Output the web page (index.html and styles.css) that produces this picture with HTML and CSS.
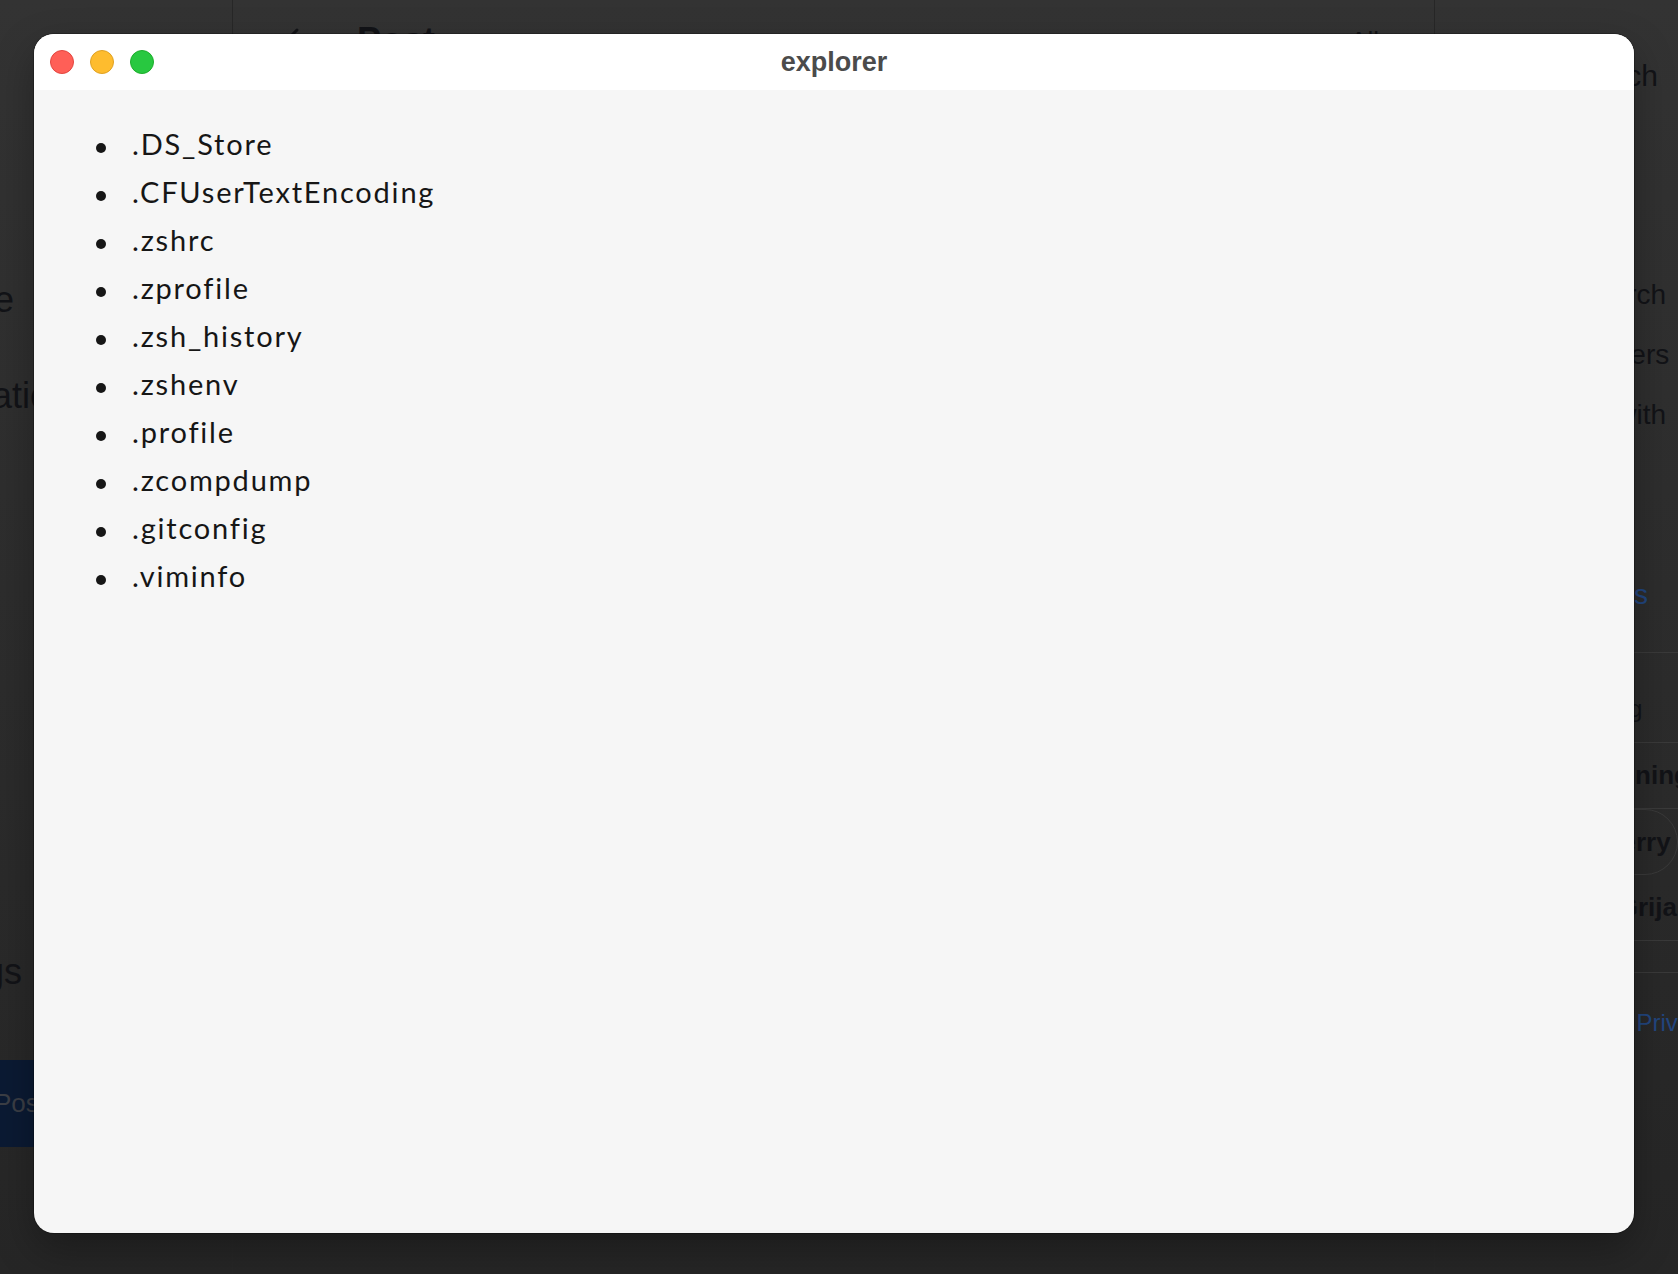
FILE: index.html
```html
<!DOCTYPE html>
<html lang="en">
<head>
    <meta charset="UTF-8">
    <meta name="viewport" content="width=device-width, initial-scale=1.0">
    <title>explorer</title>
    <link rel="stylesheet" href="styles.css">
</head>
<body>

<!-- app sitting behind the explorer window -->
<div class="backdrop">
    <aside class="nav">
        <div class="nav-list">
            <div class="nav-item">Explore</div>
            <div class="nav-item">Notifications</div>
            <div class="nav-item nav-last">Settings</div>
            <div class="nav-post">Post</div>
        </div>
    </aside>

    <main class="feed">
        <div class="feed-head">
            <svg class="back" width="30" height="30" viewBox="0 0 30 30">
                <path d="M27 15H3M14 4L3 15l11 11" fill="none" stroke="#121317" stroke-width="3" stroke-linecap="round" stroke-linejoin="round"/>
            </svg>
            <span class="feed-title">Post</span>
            <span class="feed-new">All</span>
        </div>
    </main>

    <aside class="side">
        <div class="search">Search</div>
        <div class="side-text">
            <div>Do a new search</div>
            <div>or find new users</div>
            <div>and connect with</div>
        </div>
        <div class="side-link">Search settings</div>
        <div class="trend-head">What's happening</div>
        <div class="trend-row"><span class="avatar"></span>Olivia Manning</div>
        <div class="trend-row pill"><span class="avatar"></span>Chuck Berry</div>
        <div class="trend-row"><span class="avatar"></span>Adela G. Grijalva</div>
        <div class="trend-row short"></div>
        <div class="side-foot"><span>Terms of Service</span> <span class="side-link-inline">Privacy</span></div>
    </aside>
</div>

<div class="window">
    <div class="titlebar">
        <div class="lights">
            <span class="light red"></span>
            <span class="light yellow"></span>
            <span class="light green"></span>
        </div>
        <div class="title">explorer</div>
        <div></div>
    </div>
    <div class="content">
        <ul class="files">
            <li>.DS_Store</li>
            <li>.CFUserTextEncoding</li>
            <li>.zshrc</li>
            <li>.zprofile</li>
            <li>.zsh_history</li>
            <li>.zshenv</li>
            <li>.profile</li>
            <li>.zcompdump</li>
            <li>.gitconfig</li>
            <li>.viminfo</li>
        </ul>
    </div>
</div>

</body>
</html>
```

FILE: styles.css
```css
body {
    margin: 0;
    width: 1678px;
    height: 1274px;
    overflow: hidden;
    position: relative;
    font-family: "Liberation Sans", Arial, sans-serif;
    background: linear-gradient(#333333, #262626);
}

/* Background app (dimmed) */
.backdrop {
    display: grid;
    grid-template-columns: 233px 1fr 243px;
    height: 1274px;
    color: #121317;
    white-space: nowrap;
}
.nav {
    border-right: 1px solid #272727;
    padding-top: 252px;
    overflow: hidden;
}
.nav-list {
    margin-left: -108px;
}
.nav-item {
    height: 96px;
    line-height: 96px;
    font-size: 36px;
}
.nav-last {
    margin-top: 480px;
}
.nav-post {
    margin-top: 40px;
    width: 300px;
    height: 87px;
    line-height: 87px;
    padding-left: 102px;
    box-sizing: border-box;
    border-radius: 44px;
    background-color: #0b1a33;
    color: #3b3e45;
    font-size: 26px;
}
.feed {
    border-right: 1px solid #272727;
}
.feed-head {
    display: flex;
    align-items: center;
    height: 82px;
    padding: 0 55px 0 50px;
}
.feed-title {
    margin-left: 44px;
    font-size: 36px;
    font-weight: bold;
}
.feed-new {
    margin-left: auto;
    font-size: 26px;
}
.side {
    padding-left: 16px;
    overflow: hidden;
}
.search {
    margin-top: 46px;
    height: 60px;
    line-height: 60px;
    padding-left: 112px;
    font-size: 30px;
}
.side-text {
    margin-top: 159px;
    padding-left: 5px;
    font-size: 28px;
    line-height: 60px;
}
.side-link {
    margin-top: 120px;
    padding-left: 4px;
    font-size: 28px;
    line-height: 60px;
    color: #22467f;
    padding-bottom: 27px;
    border-bottom: 1px solid #3a3a3a;
}
.trend-head {
    font-size: 24px;
    line-height: 40px;
    padding: 36px 0 13px;
    border-bottom: 1px solid #3a3a3a;
}
.trend-row {
    display: flex;
    align-items: center;
    gap: 10px;
    height: 65px;
    font-size: 26px;
    font-weight: bold;
    border-bottom: 1px solid #3a3a3a;
}
.trend-row.pill {
    padding-left: 10px;
    border: 1px solid #3a3a3a;
    border-radius: 33px;
    box-sizing: border-box;
    height: 66px;
}
.trend-row.short {
    height: 31px;
}
.avatar {
    flex-shrink: 0;
    width: 44px;
    height: 44px;
    border-radius: 50%;
    background-color: #2b2b2b;
}
.side-foot {
    margin-top: 30px;
    font-size: 24px;
    line-height: 40px;
}
.side-link-inline {
    color: #22467f;
}

/* Explorer window */
.window {
    position: absolute;
    left: 34px;
    top: 34px;
    width: 1600px;
    height: 1199px;
    border-radius: 20px;
    overflow: hidden;
    display: flex;
    flex-direction: column;
    background-color: #f6f6f6;
    box-shadow: 0 0 0 1px rgba(0, 0, 0, 0.25), 0 16px 40px rgba(0, 0, 0, 0.3);
}
.titlebar {
    display: grid;
    grid-template-columns: 1fr auto 1fr;
    align-items: center;
    height: 56px;
    padding-left: 16px;
    background-color: #ffffff;
}
.lights {
    display: flex;
    gap: 16px;
}
.light {
    width: 24px;
    height: 24px;
    border-radius: 50%;
    box-sizing: border-box;
}
.red {
    background-color: #ff5f57;
    border: 1px solid #e2463f;
}
.yellow {
    background-color: #febc2e;
    border: 1px solid #dfa123;
}
.green {
    background-color: #28c840;
    border: 1px solid #1dad2b;
}
.title {
    font-size: 27px;
    font-weight: bold;
    color: #4b4b4b;
    padding-right: 16px;
}
.content {
    flex: 1;
}
.files {
    margin: 0;
    padding: 30px 0 0 98px;
    list-style: none;
    font-family: Lato, "Open Sans", sans-serif;
    font-size: 29px;
    line-height: 48px;
    letter-spacing: 1.8px;
    color: #161616;
}
.files li::before {
    content: "";
    display: inline-block;
    width: 10px;
    height: 10px;
    border-radius: 50%;
    background-color: #161616;
    margin: 0 26px 0 -36px;
    vertical-align: 2px;
}
```
